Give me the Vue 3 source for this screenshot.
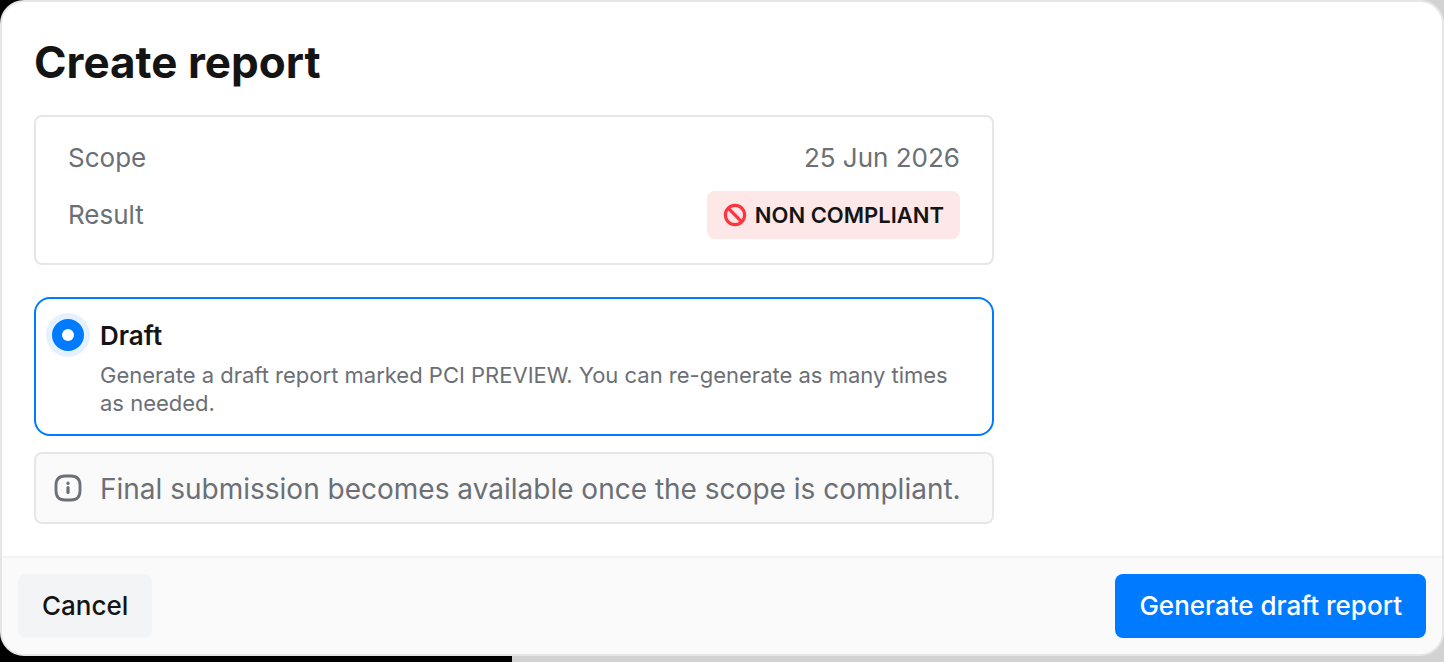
<script setup>
const rows = { scope: 'Scope', date: '25 Jun 2026', result: 'Result', status: 'NON COMPLIANT' }
</script>

<template>
  <div class="stage">
    <section class="dialog">
      <div class="body">
        <h1 class="title">Create report</h1>
        <div class="summary">
          <div class="row">
            <span class="label">{{ rows.scope }}</span>
            <span class="label">{{ rows.date }}</span>
          </div>
          <div class="row">
            <span class="label">{{ rows.result }}</span>
            <span class="badge">
              <svg class="ban" viewBox="0 0 24 24" fill="none" stroke="#fb3640" stroke-width="3.2" stroke-linecap="butt">
                <circle cx="12" cy="12" r="9.6" />
                <path d="M5.2 5.2l13.6 13.6" />
              </svg>
              {{ rows.status }}
            </span>
          </div>
        </div>
        <div class="option">
          <span class="radio"><span class="dot"></span></span>
          <div class="option-text">
            <div class="option-title">Draft</div>
            <p class="option-desc">Generate a draft report marked PCI PREVIEW. You can re-generate as many times as needed.</p>
          </div>
        </div>
        <div class="note">
          <svg class="info" viewBox="0 0 28 28" fill="none" stroke="#6b6f76" stroke-width="2.8" stroke-linecap="round" stroke-linejoin="round">
            <path d="M14 2h3c6 0 9 3 9 9v6c0 6-3 9-9 9h-6c-6 0-9-3-9-9v-6c0-6 3-9 9-9z" />
            <path d="M14 13.5v5" stroke-width="3.2" />
            <path d="M14 9.2v.3" stroke-width="3.2" />
          </svg>
          <span class="note-text">Final submission becomes available once the scope is compliant.</span>
        </div>
      </div>
      <footer class="footer">
        <button class="btn cancel">Cancel</button>
        <button class="btn primary">Generate draft report</button>
      </footer>
    </section>
  </div>
</template>

<style>
html, body { margin: 0; background: #000; }
</style>

<style scoped>
.stage {
  width: 1444px;
  height: 662px;
  overflow: hidden;
  background: linear-gradient(90deg, #000 0 512px, #d2d2d2 512px);
  font-family: Inter, "Noto Sans", sans-serif;
  color: #141414;
}
.dialog {
  box-sizing: border-box;
  width: 1444px;
  height: 656px;
  display: flex;
  flex-direction: column;
  background: #fff;
  border: 2px solid #e6e6e6;
  border-radius: 24px;
  overflow: hidden;
}
.body {
  flex: 1;
  padding: 32px 32px 0;
  display: flex;
  flex-direction: column;
  align-items: flex-start;
}
.title {
  margin: 0 0 24px;
  font-size: 44px;
  line-height: 57px;
  font-weight: 700;
}
.summary {
  box-sizing: border-box;
  width: 960px;
  height: 150px;
  padding: 24px 32px;
  border: 2px solid #e6e6e6;
  border-radius: 8px;
  display: flex;
  flex-direction: column;
  gap: 16px;
  font-size: 26px;
  color: #6b6f76;
}
.row {
  display: flex;
  justify-content: space-between;
  align-items: center;
  min-height: 34px;
}
.label { padding-bottom: 2px; }
.badge {
  display: flex;
  align-items: center;
  gap: 8px;
  height: 48px;
  padding: 0 16px;
  border-radius: 8px;
  background: #fee7e7;
  color: #141414;
  font-size: 22px;
  font-weight: 600;
}
.ban { width: 24px; height: 24px; flex: none; }
.option {
  box-sizing: border-box;
  width: 960px;
  height: 139px;
  margin-top: 32px;
  padding: 20px 32px 0 16px;
  display: flex;
  gap: 16px;
  border: 2px solid #007bff;
  border-radius: 16px;
}
.radio {
  box-sizing: border-box;
  width: 32px;
  height: 32px;
  flex: none;
  border-radius: 50%;
  background: #007bff;
  box-shadow: 0 0 0 6px #e5f1ff;
  display: flex;
  align-items: center;
  justify-content: center;
}
.dot { width: 12px; height: 12px; border-radius: 50%; background: #fff; }
.option-title {
  padding-top: 1px;
  font-size: 26px;
  line-height: 32px;
  font-weight: 600;
}
.option-desc {
  margin: 9px 0 0;
  font-size: 22px;
  line-height: 28px;
  color: #6b6f76;
}
.note {
  box-sizing: border-box;
  width: 960px;
  height: 72px;
  margin-top: 16px;
  padding: 0 16px 0 18px;
  display: flex;
  align-items: center;
  gap: 18px;
  background: #fafafa;
  border: 2px solid #e6e6e6;
  border-radius: 8px;
  font-size: 28px;
  color: #6b6f76;
  white-space: nowrap;
}
.note-text { padding-top: 2px; }
.info { width: 28px; height: 28px; flex: none; }
.footer {
  box-sizing: border-box;
  height: 98px;
  padding: 16px;
  display: flex;
  justify-content: space-between;
  align-items: center;
  background: #fafafa;
  border-top: 2px solid #f3f3f3;
}
.btn {
  height: 64px;
  border: 0;
  border-radius: 8px;
  padding: 0 24px 2px;
  font-family: inherit;
  font-size: 26px;
  font-weight: 500;
}
.cancel { background: #f3f4f6; color: #141414; }
.primary { background: #007bff; color: #fff; }
</style>
